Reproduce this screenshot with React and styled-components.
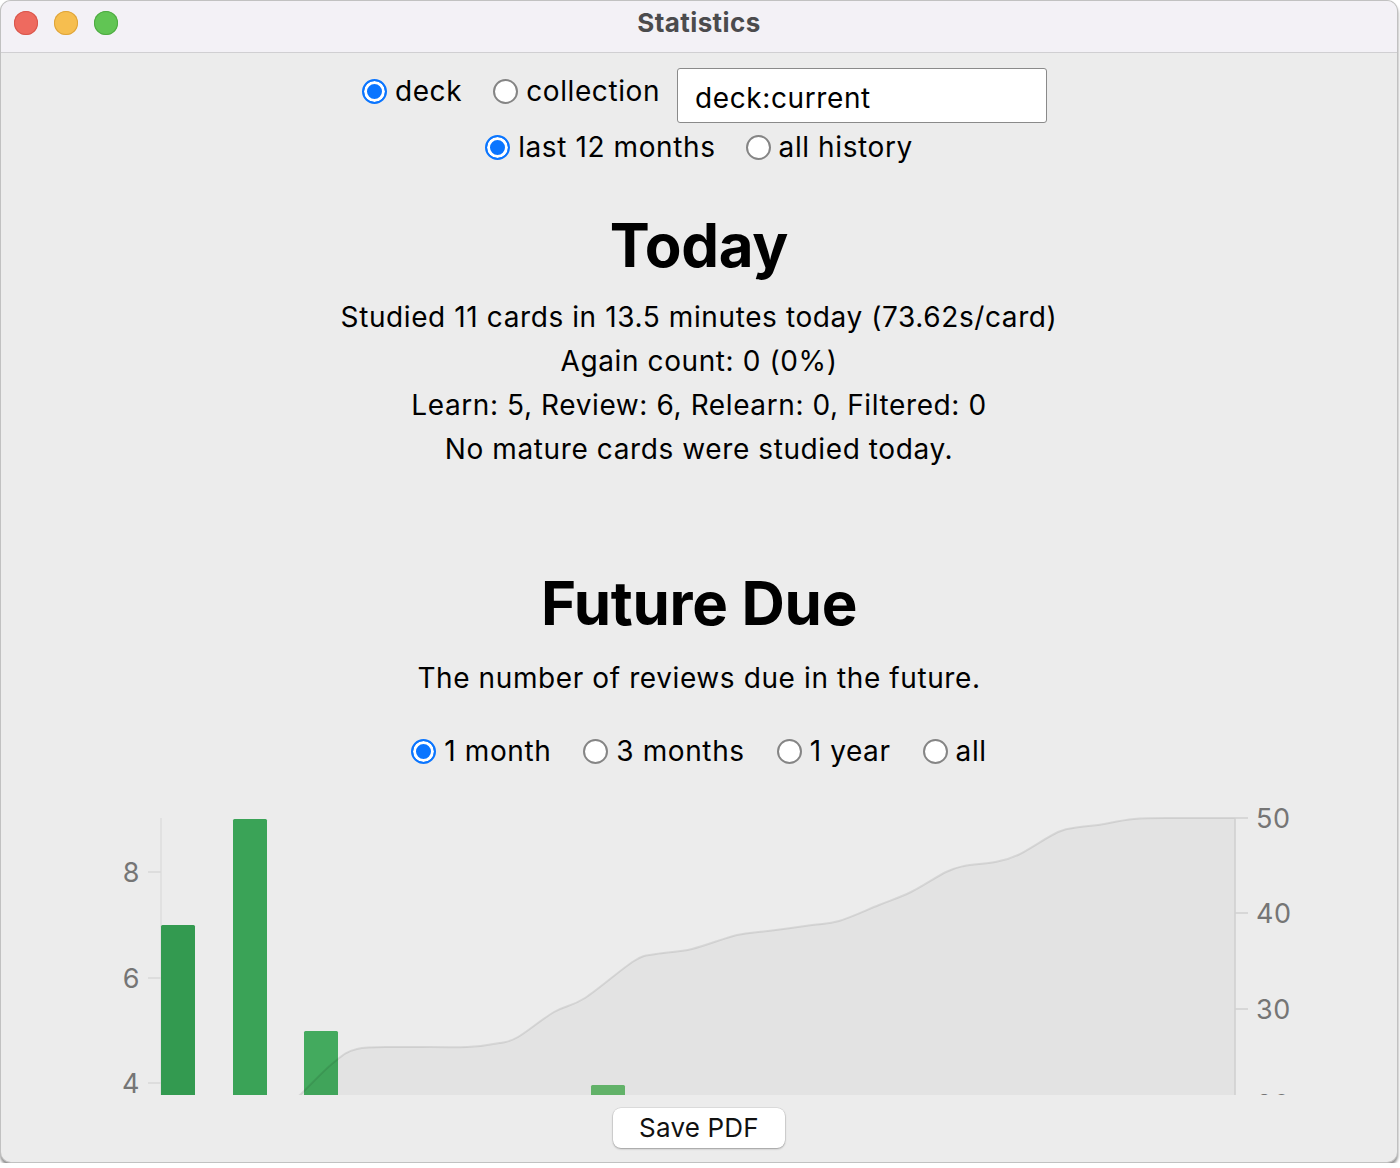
import React from 'react';
import styled, { createGlobalStyle } from 'styled-components';

const GlobalStyle = createGlobalStyle`
  html, body {
    margin: 0;
    padding: 0;
    background: #ffffff;
  }
  body {
    font-family: Inter, "Noto Sans", "Liberation Sans", sans-serif;
    color: #000;
  }
`;

const Window = styled.div`
  width: 1398px;
  height: 1163px;
  box-sizing: border-box;
  border: 1px solid rgba(0, 0, 0, 0.18);
  border-radius: 11px;
  overflow: hidden;
  background: #ececec;
  box-shadow: 0 3px 3px rgba(0, 0, 0, 0.45);
  display: flex;
  flex-direction: column;
`;

const TitleBar = styled.header`
  height: 51px;
  flex: none;
  background: #f3f1f6;
  border-bottom: 1px solid #d0cfd2;
  position: relative;
`;

const Lights = styled.div`
  display: flex;
  gap: 16px;
  padding: 10px 0 0 13px;
`;

const Light = styled.span`
  width: 24px;
  height: 24px;
  border-radius: 50%;
  background: ${p => p.$fill};
  box-shadow: inset 0 0 0 1px ${p => p.$edge};
`;

const Title = styled.h1`
  position: absolute;
  top: 5px;
  left: 0;
  right: 0;
  margin: 0;
  text-align: center;
  font-size: 26px;
  line-height: 34px;
  letter-spacing: 0.4px;
  font-weight: 700;
  color: #4b4b4d;
  pointer-events: none;
`;

const WebView = styled.main`
  height: 1042px;
  flex: none;
  overflow: hidden;
  display: flex;
  flex-direction: column;
  align-items: center;
  font-size: 28px;
  letter-spacing: 0.6px;
`;

const Controls = styled.div`
  display: flex;
  flex-direction: column;
  align-items: center;
  padding-top: 15px;
  gap: 7px;
`;

const Row = styled.div`
  display: flex;
  align-items: ${p => (p.$top ? 'flex-start' : 'center')};
  gap: ${p => p.$gap ?? 30}px;
  padding-left: ${p => p.$shift || 0}px;
`;

const RadioLabel = styled.label`
  display: inline-flex;
  align-items: center;
  gap: 8px;
  font-size: 28px;
  line-height: 34px;
  margin-top: ${p => p.$offset || 0}px;
  margin-right: ${p => p.$after || 0}px;
`;

const RadioMark = styled.span`
  width: 25px;
  height: 25px;
  box-sizing: border-box;
  border-radius: 50%;
  flex: none;
  background: ${p => (p.$checked ? '#0a75ff' : '#ffffff')};
  border: 2px solid ${p => (p.$checked ? '#0a75ff' : '#858585')};
  box-shadow: ${p => (p.$checked ? 'inset 0 0 0 3px #ffffff' : 'none')};
`;

const SearchInput = styled.div`
  width: 370px;
  height: 55px;
  box-sizing: border-box;
  border: 1.5px solid #8a8a8a;
  border-radius: 3px;
  background: #fff;
  padding: 4px 17px 0;
  display: flex;
  align-items: center;
  font-size: 28px;
`;

const Heading = styled.h2`
  margin: ${p => p.$top}px 0 0;
  font-size: 60px;
  line-height: 72px;
  font-weight: 700;
  letter-spacing: -0.3px;
`;

const Lines = styled.div`
  margin-top: ${p => p.$top}px;
  text-align: center;
  font-size: 28px;
  line-height: 44px;
`;

const ChartBox = styled.div`
  margin-top: 22px;
  width: 100%;
  flex: none;
`;

const BottomBar = styled.footer`
  flex: 1;
  display: flex;
  align-items: center;
  justify-content: center;
  padding-bottom: 2px;
`;

const SaveButton = styled.button`
  width: 172px;
  height: 40px;
  border: none;
  border-radius: 8px;
  background: #ffffff;
  box-shadow: 0 0 0 0.5px rgba(0, 0, 0, 0.12), 0 1px 2px rgba(0, 0, 0, 0.3);
  font-family: Inter, "Noto Sans", "Liberation Sans", sans-serif;
  font-size: 26px;
  letter-spacing: 0.2px;
  color: #111;
  padding: 0;
`;

const Radio = ({ checked, children, offset, after }) => (
  <RadioLabel $offset={offset} $after={after}>
    <RadioMark $checked={checked} />
    {children}
  </RadioLabel>
);

// cumulative curve, traced in window coordinates
const curve = [
  [161, 1229], [230, 1160], [270, 1124], [300, 1095], [333, 1063], [357, 1049],
  [400, 1047], [467, 1047], [500, 1043], [518, 1037], [554, 1012], [585, 998],
  [634, 961], [656, 954], [692, 949], [737, 935], [768, 931], [812, 925],
  [839, 921], [879, 905], [911, 892], [946, 872], [964, 866], [995, 862],
  [1018, 855], [1058, 832], [1080, 827], [1098, 825], [1134, 819], [1180, 818],
  [1235, 818],
];

const smooth = pts => {
  let d = `M${pts[0][0]},${pts[0][1]}`;
  for (let i = 0; i < pts.length - 1; i++) {
    const p0 = pts[i - 1] || pts[i];
    const p1 = pts[i];
    const p2 = pts[i + 1];
    const p3 = pts[i + 2] || p2;
    const c1x = p1[0] + (p2[0] - p0[0]) / 6;
    const c1y = p1[1] + (p2[1] - p0[1]) / 6;
    const c2x = p2[0] - (p3[0] - p1[0]) / 6;
    const c2y = p2[1] - (p3[1] - p1[1]) / 6;
    d += ` C${c1x.toFixed(1)},${c1y.toFixed(1)} ${c2x.toFixed(1)},${c2y.toFixed(1)} ${p2[0]},${p2[1]}`;
  }
  return d;
};

const bars = [
  { x: 161, top: 925, fill: '#339a50' },
  { x: 233, top: 819, fill: '#3aa357' },
  { x: 304, top: 1031, fill: '#43aa5e' },
  { x: 591, top: 1085, fill: '#66b96d' },
];

const leftTicks = [
  { y: 872, label: '8' },
  { y: 978, label: '6' },
  { y: 1083, label: '4' },
];

const rightTicks = [
  { y: 818, label: '50' },
  { y: 913, label: '40' },
  { y: 1009, label: '30' },
  { y: 1104, label: '20' },
];

const FutureChart = () => {
  const line = smooth(curve);
  return (
    <svg width="1396" height="500" viewBox="1 790 1396 500" style={{ display: 'block' }}>
      <line x1="161" y1="818" x2="161" y2="1300" stroke="#dedede" strokeWidth="1.5" />
      {leftTicks.map(t => (
        <g key={t.label}>
          <line x1="148" y1={t.y} x2="161" y2={t.y} stroke="#d8d8d8" strokeWidth="1.5" />
          <text
            x="140"
            y={t.y}
            textAnchor="end"
            dominantBaseline="central"
            fontSize="27"
            fill="#757575"
            fontFamily="Inter, 'Liberation Sans', sans-serif"
          >
            {t.label}
          </text>
        </g>
      ))}
      {bars.map(b => (
        <rect key={b.x} x={b.x} y={b.top} width="34" height={1300 - b.top} rx="1.5" fill={b.fill} />
      ))}
      <path d={`${line} L1235,1300 L161,1300 Z`} fill="rgba(0,0,0,0.035)" />
      <path d={line} fill="none" stroke="rgba(0,0,0,0.09)" strokeWidth="2" />
      <line x1="1235" y1="818" x2="1235" y2="1300" stroke="#cfcfcf" strokeWidth="1.5" />
      {rightTicks.map(t => (
        <g key={t.label}>
          <line x1="1235" y1={t.y} x2="1248" y2={t.y} stroke="#d0d0d0" strokeWidth="1.5" />
          <text
            x="1256"
            y={t.y}
            dominantBaseline="central"
            fontSize="27"
            fill="#757575"
            fontFamily="Inter, 'Liberation Sans', sans-serif"
          >
            {t.label}
          </text>
        </g>
      ))}
    </svg>
  );
};

const App = () => {
  return (
    <>
      <GlobalStyle />
      <Window>
        <TitleBar>
          <Lights>
            <Light $fill="#ee6a5f" $edge="#d8574c" />
            <Light $fill="#f6be4f" $edge="#dea43a" />
            <Light $fill="#61c554" $edge="#4eaa42" />
          </Lights>
          <Title>Statistics</Title>
        </TitleBar>

        <WebView>
          <Controls>
            <Row $top $gap={0} $shift={11}>
              <Radio checked offset={6} after={31}>deck</Radio>
              <Radio offset={6} after={17}>collection</Radio>
              <SearchInput>deck:current</SearchInput>
            </Row>
            <Row $gap={30}>
              <Radio checked>last 12 months</Radio>
              <Radio>all history</Radio>
            </Row>
          </Controls>

          <Heading $top={45}>Today</Heading>
          <Lines $top={14}>
            <div>Studied 11 cards in 13.5 minutes today (73.62s/card)</div>
            <div>Again count: 0 (0%)</div>
            <div>Learn: 5, Review: 6, Relearn: 0, Filtered: 0</div>
            <div>No mature cards were studied today.</div>
          </Lines>

          <Heading $top={96}>Future Due</Heading>
          <Lines $top={17}>The number of reviews due in the future.</Lines>
          <Lines $top={34}>
            <Row $gap={32}>
              <Radio checked>1 month</Radio>
              <Radio>3 months</Radio>
              <Radio>1 year</Radio>
              <Radio>all</Radio>
            </Row>
          </Lines>

          <ChartBox>
            <FutureChart />
          </ChartBox>
        </WebView>

        <BottomBar>
          <SaveButton>Save PDF</SaveButton>
        </BottomBar>
      </Window>
    </>
  );
};

export default App;
